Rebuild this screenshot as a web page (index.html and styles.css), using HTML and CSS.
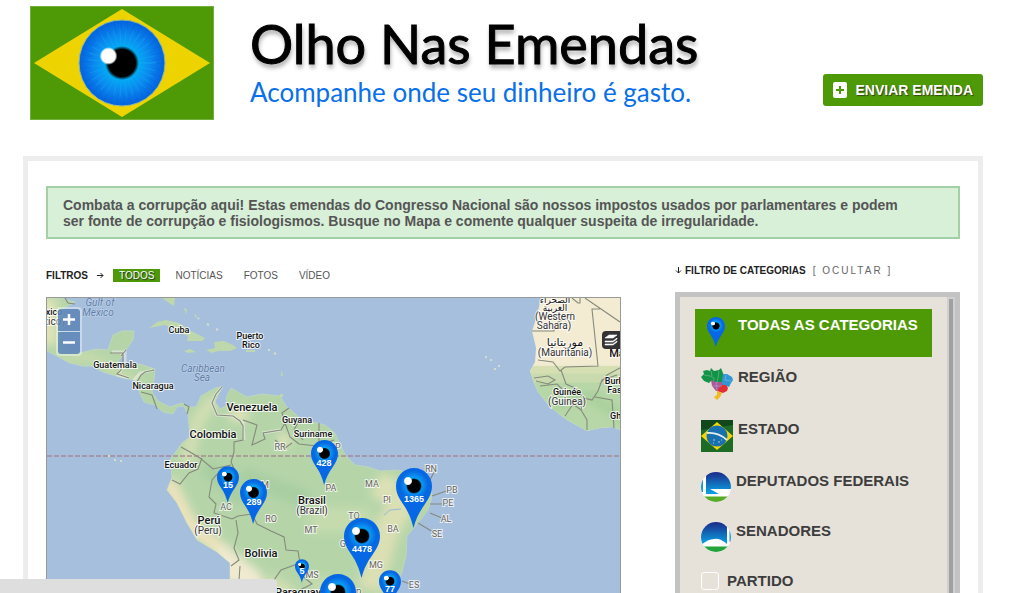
FILE: index.html
```html
<!DOCTYPE html>
<html lang="pt-BR">
<head>
<meta charset="utf-8">
<title>Olho Nas Emendas</title>
<link rel="stylesheet" href="styles.css">
</head>
<body>
<svg class="defs" aria-hidden="true">
  <defs>
    <radialGradient id="iris">
      <stop offset="0.3" stop-color="#00b4f5"/>
      <stop offset="0.62" stop-color="#0a8df0"/>
      <stop offset="0.95" stop-color="#0567e0"/>
    </radialGradient>
    <radialGradient id="pupil">
      <stop offset="0.8" stop-color="#000"/>
      <stop offset="1" stop-color="#000" stop-opacity="0"/>
    </radialGradient>
    <radialGradient id="gloss">
      <stop offset="0.75" stop-color="#fff"/>
      <stop offset="1" stop-color="#fff" stop-opacity="0"/>
    </radialGradient>
    <linearGradient id="dome" x1="0" y1="0" x2="0" y2="1">
      <stop offset="0" stop-color="#1d2a86"/>
      <stop offset="0.9" stop-color="#0a9be0"/>
    </linearGradient>
    <clipPath id="disc"><circle cx="15" cy="15" r="15"/></clipPath>
    <symbol id="pin" viewBox="0 0 36 60">
      <path d="M18 0C8 0 0 8 0 18C0 25 3 30 7 36C12 43 15 50 17.500 60C20 50 24 43 29 36C33 30 36 25 36 18C36 8 28 0 18 0Z" fill="#0668e4"/>
      <circle cx="18" cy="17" r="15" fill="url(#iris)"/>
      <circle cx="18" cy="18" r="8" fill="url(#pupil)"/>
      <circle cx="12" cy="13" r="4.500" fill="url(#gloss)"/>
    </symbol>
  </defs>
</svg>
<div class="page">
  <header class="header">
    <svg class="logo" viewBox="0 0 184 114" role="img" aria-label="Olho Nas Emendas">
      <rect width="184" height="114" fill="#4e9a06"/>
      <rect x="0.500" y="0.500" width="183" height="113" fill="none" stroke="#74ae3c"/>
      <path d="M4 57L92 3L180 57L92 111Z" fill="#edd400"/>
      <circle cx="92" cy="57" r="43" fill="url(#iris)" stroke="#8fb7a0" stroke-width="1"/>
      <circle cx="92" cy="57" r="25" fill="none" stroke="#1cc0fa" stroke-width="18" stroke-dasharray="1 4" opacity="0.25"/>
      <circle cx="92" cy="57" r="36" fill="none" stroke="#0850c8" stroke-width="11" stroke-dasharray="1 5" opacity="0.15"/>
      <circle cx="92" cy="57" r="17" fill="url(#pupil)"/>
      <circle cx="78.500" cy="50" r="9" fill="url(#gloss)"/>
    </svg>
    <div class="brand">
      <h1 class="brand-title">Olho Nas Emendas</h1>
      <p class="brand-tagline">Acompanhe onde seu dinheiro é gasto.</p>
    </div>
    <a class="submit" href="#enviar">
      <svg class="submit-icon" viewBox="0 0 14 16" aria-hidden="true"><rect width="14" height="16" rx="2" fill="#fff"/><path d="M7 4V12M3 8H11" stroke="#4e9a06" stroke-width="2"/></svg>
      Enviar Emenda
    </a>
  </header>

  <main class="panel">
    <p class="notice">Combata a corrupção aqui! Estas emendas do Congresso Nacional são nossos impostos usados por parlamentares e podem ser fonte de corrupção e fisiologismos. Busque no Mapa e comente qualquer suspeita de irregularidade.</p>
    <div class="columns">
      <section>
        <nav class="filters">
          <strong class="filters-label">FILTROS</strong>
          <svg class="arrow" viewBox="0 0 7 7" aria-hidden="true"><path d="M0 3.500H6M3.500 1L6 3.500L3.500 6" fill="none" stroke="#222"/></svg>
          <a class="filter filter-active" href="#todos">TODOS</a>
          <a class="filter" href="#noticias">NOTÍCIAS</a>
          <a class="filter" href="#fotos">FOTOS</a>
          <a class="filter" href="#video">VÍDEO</a>
        </nav>
        <div class="map">
          <svg class="map-canvas" viewBox="47 298 573 320" role="img" aria-label="Mapa das emendas">
            <defs>
              <filter id="soft" x="-20%" y="-20%" width="140%" height="140%"><feGaussianBlur stdDeviation="5"/></filter>
              <path id="central" d="M47 298H60L75 302L64 308L59 322L61 338L68 349L80 353L96 349L108 350L113 335L122 331L134 331L133 340L126 350L122 357L118 361L126 365L140 364L155 369L154 380L152 392L158 401L170 407L182 403L188 407L196 407L201 396L215 388L222 387L215 402L220 409L228 405L226 398L231 388L247 397L262 394L280 396L286 406L300 418L312 422L325 425L335 433L340 445L346 456L355 465L368 467L380 471L396 470L413 473L430 483L432 497L428 510L418 523L407 536L406 556L402 572L396 585L392 625H234L230 580V563L217 552L197 540L187 523L177 503L167 490L172 477L170 460L182 443L190 437L188 415L184 406L177 407L173 414L163 412L155 405L144 402L140 393L135 380L123 378L103 372L92 366L83 366L70 363L47 351Z"/>
              <path id="africa" d="M541 298L537 316L532 331L536 348L535 362L530 371L534 383L538 392L550 407L567 420L587 431L600 428L612 427L621 430V297Z"/>
              <clipPath id="central-clip"><use href="#central"/></clipPath>
              <clipPath id="africa-clip"><use href="#africa"/></clipPath>
            </defs>
            <rect x="47" y="298" width="573" height="320" fill="#a5bfdd"/>
            <use href="#central" fill="#b5d5a9" stroke="#bcd6c0"/>
            <g clip-path="url(#central-clip)">
              <g filter="url(#soft)" fill="none">
                <path d="M167 480L190 525L225 553L238 600" stroke="#eee3bd" stroke-width="15"/>
                <path d="M216 554L250 580L265 625" stroke="#f0ead1" stroke-width="25"/>
                <path d="M185 465L198 420L215 398" stroke="#d4dfb4" stroke-width="12"/>
                <path d="M47 298V345" stroke="#dfe3b7" stroke-width="20"/>
                <path d="M60 360L90 356L140 385" stroke="#d3dfad" stroke-width="5"/>
                <path d="M230 415H248M278 440H290" stroke="#e4e3bb" stroke-width="12"/>
                <path d="M423 482L402 505L386 530L370 590" stroke="#dbdfb4" stroke-width="26"/>
                <path d="M390 476L380 500" stroke="#dce1b5" stroke-width="20"/>
                <path d="M310 520L370 520M310 590H350" stroke="#c5dbae" stroke-width="25"/>
                <path d="M240 475L310 500M205 465L245 500" stroke="#a8cea1" stroke-width="18"/>
                <path d="M265 585L290 600" stroke="#d6dfb4" stroke-width="24"/>
              </g>
              <path d="M310 459L318 455L330 457M384 515L390 510L401 509" stroke="#98b9d5" fill="none"/>
            </g>
            <use href="#africa" fill="#f3ecd2"/>
            <g clip-path="url(#africa-clip)">
              <path d="M500 372H660V460H500Z" fill="#b8d7a8" filter="url(#soft)"/>
              <path d="M510 370H660" stroke="#d5dfb2" stroke-width="8"/>
              <path d="M510 378H660" stroke="#c9dbae" stroke-width="9"/>
              <path d="M550 405L590 395L625 420" stroke="#a9d09c" stroke-width="12" fill="none" filter="url(#soft)"/>
            </g>
            <g fill="#bed7ad">
              <path d="M149 328L157 322L166 320L179 323L191 331L205 338L202 341L187 341L188 336L176 331L165 325Z"/>
              <path d="M206 350L215 348L214 342L224 341L233 345L237 348L230 351L218 351L212 353Z"/>
              <path d="M184 351L190 349L196 352L188 353ZM246 350H255V352H246ZM162 298H175L174 306L169 303Z"/>
              <path d="M184 308l3 1l-1 6zM194 313l4 5l-3-1zM278 361l2 3zM281 370l2 5l-2 2zM280 394h3v3h-3z"/>
            </g>
            <path d="M198 318l1 1M207 324l2 1M216 329l2 1M268 350h2M274 353l2 1M485 357h2M490 360h2M498 366h2M494 369h2M108 456h2M114 460h2M120 461h2" stroke="#d4dfcb" stroke-width="2"/>
            <g fill="none" stroke="#efefe6" stroke-width="3" opacity="0.6"><path d="M112 352H125V363L118 375L129 378M126 350L121 356M153 370L140 373L134 380M222 387L216 394L212 403L217 415L233 416L243 423L244 440M262 433L281 430"/></g>
            <g fill="none" stroke="#858a7d" stroke-width="1.100">
              <path d="M65 298L68 303L75 304M110 353H123V362L121 370L117 374L129 378M126 350L121 356M154 370L145 372L141 375L137 382M141 392L152 395L157 409M184 404L189 407L187 414"/>
              <path d="M222 387L216 394L212 403L217 415L233 416L240 421L243 426V440L234 442L234 452L231 462L237 475"/>
              <path d="M181 447L190 452L200 458L213 469L231 465M202 458L198 469L189 473L180 484L172 480M220 471L212 480L209 497L216 504L214 513L232 519"/>
              <path d="M243 420L257 425L252 445L265 439L263 433L281 430L285 423L282 413L289 408M285 423L290 437L299 444L317 446L334 440M300 419L294 430L303 440M319 423V443M275 440L285 448L292 443"/>
              <path d="M232 519L238 516L252 514L257 524L271 531L284 537L286 550L298 551L300 563M236 520L238 533L234 548L239 560L231 566M240 566L239 580M300 563L299 573L312 584L300 590M300 563L281 570L274 580L275 595"/>
              <path d="M432 496L446 491M430 504H442M430 513L442 518M418 523L433 532M402 581L410 584M430 480L434 472"/>
              <path d="M532 331H554V325L572 313M572 298L578 303H580V298M585 298L620 322M600 309H592L598 366L565 367L560 371L553 362L538 360M534 378L548 376L555 380L548 384L536 381M540 386L557 384L565 392M561 370L566 384L575 388L584 398L592 400L598 391L602 380L617 375M584 398L581 410L587 420V430M565 416L573 404L581 410M595 397L612 400L614 428M600 384L607 375L620 368"/>
            </g>
            <path d="M47 456H620" stroke="#a8808e" stroke-width="1.500" stroke-dasharray="5 2" opacity="0.85"/>
            <g class="sea"><text x="100" y="306">Gulf of</text><text x="98" y="316">Mexico</text><text x="203" y="372">Caribbean</text><text x="202" y="381">Sea</text></g>
            <g class="places">
              <text x="54" y="315">xico</text><text x="54" y="325" class="local">xico)</text>
              <text x="179" y="333">Cuba</text><text x="250" y="339">Puerto</text><text x="251" y="348">Rico</text>
              <text x="115" y="368">Guatemala</text><text x="153" y="389">Nicaragua</text>
              <text x="252" y="411" class="major">Venezuela</text><text x="213" y="438" class="major">Colombia</text>
              <text x="297" y="423">Guyana</text><text x="313" y="437">Suriname</text><text x="181" y="468">Ecuador</text>
              <text x="209" y="524" class="major">Perú</text><text x="208" y="534" class="local">(Peru)</text>
              <text x="312" y="504" class="major">Brasil</text><text x="312" y="514" class="local">(Brazil)</text>
              <text x="261" y="557" class="major">Bolivia</text><text x="298" y="596" class="major">Paraguay</text>
              <text x="555" y="303" class="arabic">الصحراء</text><text x="555" y="311" class="arabic">الغربية</text>
              <text x="555" y="320" class="local">(Western</text><text x="554" y="329" class="local">Sahara)</text>
              <text x="565" y="346" class="arabic arabic-major">موريتانيا</text><text x="565" y="356" class="local">(Mauritania)</text>
              <text x="567" y="395">Guinée</text><text x="567" y="405" class="local">(Guinea)</text>
              <text x="617" y="357" class="major">Ma</text><text x="614" y="384">Burk</text><text x="617" y="393">Faso</text><text x="618" y="419">Gha</text>
            </g>
            <g class="states">
              <text x="280" y="450">RR</text><text x="335" y="450">AP</text><text x="226" y="510">AC</text><text x="262" y="488">AM</text><text x="271" y="522">RO</text><text x="331" y="491">PA</text><text x="372" y="487">MA</text><text x="387" y="503">PI</text><text x="354" y="519">TO</text><text x="311" y="533">MT</text><text x="393" y="532">BA</text><text x="346" y="547">GO</text><text x="376" y="568">MG</text><text x="312" y="578">MS</text><text x="431" y="472">RN</text><text x="452" y="493">PB</text><text x="448" y="506">PE</text><text x="446" y="522">AL</text><text x="437" y="537">SE</text><text x="414" y="588">ES</text><text x="356" y="596">SP</text>
            </g>
            <g class="pins">
              <use href="#pin" x="217" y="466" width="22" height="37"/><text x="228" y="488">15</text>
              <use href="#pin" x="240" y="479" width="27" height="45"/><text x="254" y="505">289</text>
              <use href="#pin" x="311" y="440" width="27" height="45"/><text x="324" y="466">428</text>
              <use href="#pin" x="396" y="468" width="36" height="60"/><text x="414" y="502">1365</text>
              <use href="#pin" x="344" y="518" width="36" height="60"/><text x="362" y="552">4478</text>
              <use href="#pin" x="295" y="559" width="14" height="24"/><text x="302" y="574">5</text>
              <use href="#pin" x="320" y="574" width="36" height="60"/>
              <use href="#pin" x="379" y="570" width="22" height="37"/><text x="390" y="592">77</text>
            </g>
          </svg>
          <div class="zoom">
            <button class="zoom-button zoom-in" type="button" aria-label="Aproximar"><svg viewBox="0 0 22 22" class="zoom-glyph"><path d="M11 5V16M5 10.500H17" stroke="#fff" stroke-width="2.500"/></svg></button>
            <button class="zoom-button zoom-out" type="button" aria-label="Afastar"><svg viewBox="0 0 22 22" class="zoom-glyph"><path d="M5 10.500H17" stroke="#fff" stroke-width="2.500"/></svg></button>
          </div>
          <button class="layers" type="button" aria-label="Camadas"><svg class="layers-icon" viewBox="0 0 18 18"><path d="M7 4H15L11 7H3Z M3 10H11L15 7V8L11 11H3ZM3 13H11L15 10V11L11 14H3Z" fill="#fff" stroke="#fff" stroke-width="0.600"/></svg></button>
        </div>
      </section>

      <aside>
        <div class="category-heading">
          <svg class="arrow" viewBox="0 0 7 7" aria-hidden="true"><path d="M3.500 0V6M1 3.500L3.500 6L6 3.500" fill="none" stroke="#222"/></svg>
          <strong class="filters-label">FILTRO DE CATEGORIAS</strong>
          <a class="toggle" href="#ocultar">[ OCULTAR ]</a>
        </div>
        <div class="category-box">
          <ul class="categories">
            <li><a class="category category-active" href="#todas"><svg class="icon" viewBox="0 0 32 32"><use href="#pin" x="6" y="1" width="18" height="30"/></svg>TODAS AS CATEGORIAS</a></li>
            <li><a class="category" href="#regiao"><svg class="icon" viewBox="0 0 32 32">
              <path d="M0 9L3 6L2 3L6 2L9 3L10 0L13 3L18 2L20 0L22 5L23 9L21 14L16 15L10 13L8 15L3 13Z" fill="#119447"/>
              <path d="M22 6L26 6L31 9L32 12L30 15L28 19L25 18L21 17L21 13Z" fill="#2e97d4"/>
              <path d="M10 12L15 14L21 14L22 18L18 22L15 23L11 18Z" fill="#a45a9b"/>
              <path d="M21 17L25 17L27 20L26 23L22 25L16 23L18 20Z" fill="#dd3030"/>
              <path d="M16 23L21 25L19 29L16 32L13 29L16 27Z" fill="#f2b91d"/>
              <path d="M3 7L9 8L13 10V13M10 3L11 8M18 3L17 10L16 15M25 7L24 12L30 13M15 14L16 22M11 18L21 18" fill="none" stroke="#e7e2d9" stroke-width="0.500" opacity="0.6"/>
            </svg>REGIÃO</a></li>
            <li><a class="category" href="#estado"><svg class="icon" viewBox="0 0 32 32"><rect width="32" height="32" fill="#1d6b24"/><path d="M0 0H32V5L0 10Z" fill="#10481c"/><path d="M0 16L16 2L32 16L16 30Z" fill="#f2d50b"/><circle cx="16" cy="16" r="10.500" fill="#1870af"/><path d="M6 13Q17 12 26 20" fill="none" stroke="#e2eff0" stroke-width="1.800"/><path d="M12 20h2M17 22h2M20 20h1M12 23h1" stroke="#a7cbe3"/></svg>ESTADO</a></li>
            <li><a class="category" href="#deputados"><svg class="icon icon-round" viewBox="0 0 30 30"><g clip-path="url(#disc)"><rect width="30" height="30" fill="#fff"/><path d="M5 0H30V17H9L18 22H5Z" fill="url(#dome)"/><path d="M0 8H2V20H0Z" fill="#1298d8"/><path d="M0 24.500H30V30H0Z" fill="#58ab26"/></g></svg>DEPUTADOS FEDERAIS</a></li>
            <li><a class="category" href="#senadores"><svg class="icon icon-round" viewBox="0 0 30 30"><g clip-path="url(#disc)"><rect width="30" height="30" fill="#fff"/><path d="M0 0H26V22Q19 16 13 17Q7 17 0 23Z" fill="url(#dome)"/><path d="M28.500 8H30V20H28.500Z" fill="#1298d8"/><path d="M0 24.500H30V30H0Z" fill="#23a43a"/></g></svg>SENADORES</a></li>
            <li><a class="category category-plain" href="#partido"><span class="swatch"></span>PARTIDO</a></li>
          </ul>
          <div class="scroll-track"></div>
        </div>
      </aside>
    </div>
  </main>
</div>
<div class="status"></div>
</body>
</html>
```
FILE: styles.css
```css
* { box-sizing: border-box; }
body {
  margin: 0;
  background: #fff;
  color: #333;
  font: 10px/13px Arial, "Liberation Sans", sans-serif;
}
a { color: inherit; text-decoration: none; }
.defs { position: absolute; width: 0; height: 0; }
.page { height: 100vh; overflow: hidden; padding: 6px 32px 0 23px; }

.header { display: flex; align-items: flex-start; padding-left: 7px; height: 150px; }
.logo { width: 184px; height: 114px; flex: none; }
.brand { flex: 1; padding: 6px 0 0 36px; font-family: Lato, sans-serif; white-space: nowrap; }
.brand-title {
  margin: 0;
  color: #000;
  font-size: 54px;
  line-height: 64px;
  font-weight: 400;
  -webkit-text-stroke: 1px #000;
  text-shadow: 1px 4px 4px #aaa;
}
.brand-tagline { margin: 0; color: #0870e8; font-size: 26px; line-height: 32px; }
.submit {
  display: flex;
  align-items: center;
  gap: 9px;
  margin-top: 68px;
  height: 32px;
  padding: 0 10px;
  border-radius: 3px;
  background: #4e9a06;
  color: #fff;
  font-size: 14px;
  font-weight: 700;
  text-transform: uppercase;
  text-shadow: 1px 1px 1px #334411;
  white-space: nowrap;
}
.submit-icon { width: 14px; height: 16px; }

.panel { border: 5px solid #ededed; padding: 25px 18px; }
.notice {
  margin: 0;
  padding: 9px 40px 8px 15px;
  border: 2px solid #a3d0a6;
  background: #d8f0d8;
  color: #555;
  font-size: 14px;
  line-height: 16px;
  font-weight: 700;
}
.columns {
  display: grid;
  grid-template-columns: minmax(0, 575fr) minmax(0, 285fr);
  gap: 54px;
}
.filters { display: flex; align-items: center; margin-top: 30px; height: 13px; gap: 9px; }
.filters-label { color: #222; }
.arrow { width: 7px; height: 7px; flex: none; }
.filter { padding: 0 6px; color: #555; }
.filter-active { background: #4e9a06; color: #fff; text-shadow: 1px 1px 1px #233; }

.map { position: relative; margin-top: 15px; border: 1px solid #999; }
.map-canvas { display: block; width: 100%; height: auto; font-family: Roboto, sans-serif; }
.map-canvas text { text-anchor: middle; paint-order: stroke; }
.places text { font-size: 9px; font-weight: 500; fill: #111; stroke: #fffc; stroke-width: 2px; }
.places .major { font-size: 11px; }
.places .local { font-size: 10px; font-weight: 400; fill: #333; }
.places .arabic { font-family: "DejaVu Sans", sans-serif; font-weight: 400; }
.places .arabic-major { font-size: 11px; }
.sea text { font-size: 10px; font-style: italic; fill: #5b7ba8; stroke: #c5d5e9; stroke-width: 1px; }
.states text { font-size: 9px; fill: #66645c; stroke: #fffb; stroke-width: 2px; }
.pins text { font: 700 9px Arial, "Liberation Sans", sans-serif; fill: #fff; }
.zoom {
  position: absolute;
  left: 9px;
  top: 9px;
  display: grid;
  gap: 1px;
  padding: 2px;
  border-radius: 4px;
  background: #ffffff66;
}
.zoom-button { width: 22px; height: 22px; padding: 0; border: 0; background: #4d7bb0cc; }
.zoom-in { border-radius: 3px 3px 0 0; }
.zoom-out { border-radius: 0 0 3px 3px; }
.zoom-glyph { display: block; width: 22px; height: 22px; }
.layers {
  position: absolute;
  right: 0;
  top: 33px;
  padding: 0;
  border: 0;
  border-radius: 4px 0 0 4px;
  background: #333;
}
.layers-icon { display: block; width: 18px; height: 18px; }

.category-heading { display: flex; align-items: center; gap: 3px; height: 13px; margin-top: 25px; }
.toggle { margin-left: 4px; color: #666; letter-spacing: 2px; }
.category-box { display: flex; margin-top: 15px; border: 5px solid #c3c3c3; background: #e6e2da; }
.categories { display: grid; gap: 4px; flex: 1; margin: 0; padding: 12px 15px; list-style: none; }
.category {
  display: flex;
  gap: 5px;
  padding: 7px 6px 9px;
  color: #3d3d3d;
  font-size: 15px;
  line-height: 18px;
  font-weight: 700;
  white-space: nowrap;
}
.category-active { background: #4e9a06; color: #fff; }
.category-plain { gap: 8px; }
.icon { width: 32px; height: 32px; flex: none; }
.icon-round { width: 30px; height: 30px; }
.swatch { width: 18px; height: 18px; border: 1px solid #fff; border-radius: 3px; }
.scroll-track { width: 8px; border: solid #d0d0d0; border-width: 2px 2px 0; background: #a0a0a0; }

.status {
  position: fixed;
  left: 0;
  bottom: 0;
  width: 277px;
  height: 14px;
  border-radius: 0 4px 0 0;
  background: #dedede;
}
```
